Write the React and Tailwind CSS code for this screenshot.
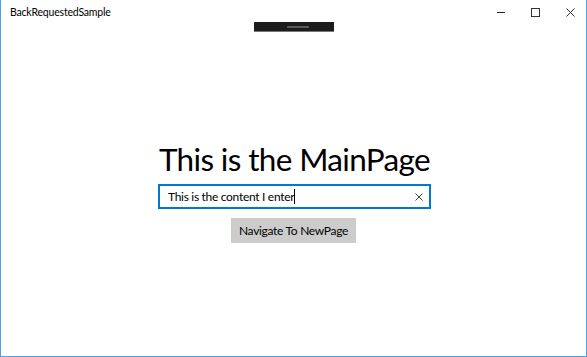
export default function App() {
  return (
    <div className="relative w-[587px] h-[357px] bg-white border-x border-b border-[#4fa0e2] overflow-hidden" style={{ fontFamily: 'Lato, "Open Sans", sans-serif' }}>
      {/* title bar */}
      <div className="flex items-center h-[24px] pl-[9px] pr-[11px] text-[10.5px] tracking-[-0.2px] text-black">
        <span className="mt-[1px]">BackRequestedSample</span>
        <div className="ml-auto flex items-center gap-[26px] h-full">
          <div className="w-[8px] h-px bg-[#222]" />
          <div className="w-[9px] h-[9px] border border-[#333]" />
          <svg width="9" height="9" viewBox="0 0 9 9">
            <path d="M0.5 0.5 L8.5 8.5 M8.5 0.5 L0.5 8.5" stroke="#333" strokeWidth="1" />
          </svg>
        </div>
      </div>

      {/* debug toolbar */}
      <div className="absolute left-[253px] top-[22px] w-[80px] h-[10px] bg-[#1c1c1c] border-b border-[#777] flex justify-center items-center">
        <div className="w-[22px] h-[2px] bg-[#5a5a5a] ml-[7px]" />
      </div>

      {/* content */}
      <div className="flex flex-col items-center pt-[115px] pl-[2px]">
        <h1 className="text-[31.5px] tracking-[-0.65px] leading-[40px] text-black font-normal whitespace-nowrap">This is the MainPage</h1>
        <div className="mt-[5px] w-[273px] h-[25px] border-2 border-[#0078d7] flex items-center pl-[8px] pr-[6px] text-[12px] tracking-[-0.3px] text-black">
          <span className="whitespace-nowrap">This is the content I enter</span>
          <span className="w-px h-[15px] bg-black" />
          <svg className="ml-auto" width="8" height="8" viewBox="0 0 8 8">
            <path d="M0.5 0.5 L7.5 7.5 M7.5 0.5 L0.5 7.5" stroke="#444" strokeWidth="1" />
          </svg>
        </div>
        <button className="mt-[9px] mr-[2px] w-[125px] h-[25px] bg-[#cccccc] text-[12px] tracking-[-0.3px] text-black flex items-center justify-center whitespace-nowrap">
          Navigate To NewPage
        </button>
      </div>
    </div>
  );
}
